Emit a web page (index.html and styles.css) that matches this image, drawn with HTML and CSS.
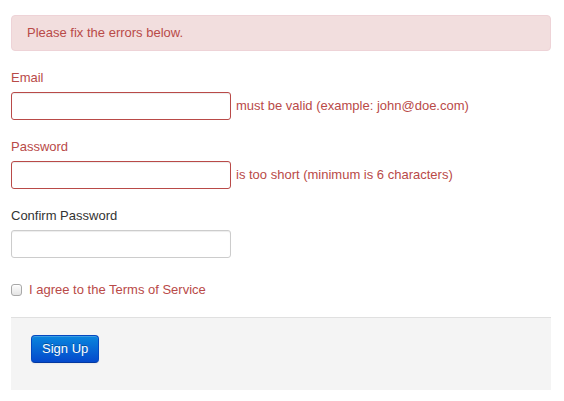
FILE: index.html
```html
<!DOCTYPE html>
<html>
<head>
<meta charset="utf-8">
<link rel="stylesheet" href="styles.css">
</head>
<body>
<div class="page">
  <div class="alert">Please fix the errors below.</div>
  <form class="form">
    <div class="group error">
      <label class="lbl">Email</label>
      <div class="row">
        <input class="field" type="text">
        <span class="help">must be valid (example: john@doe.com)</span>
      </div>
    </div>
    <div class="group error">
      <label class="lbl">Password</label>
      <div class="row">
        <input class="field" type="password">
        <span class="help">is too short (minimum is 6 characters)</span>
      </div>
    </div>
    <div class="group">
      <label class="lbl">Confirm Password</label>
      <div class="row">
        <input class="field" type="password">
      </div>
    </div>
    <label class="check error">
      <input class="box" type="checkbox">
      <span>I agree to the Terms of Service</span>
    </label>
    <div class="actions">
      <button type="button" class="btn">Sign Up</button>
    </div>
  </form>
</div>
</body>
</html>
```

FILE: styles.css
```css
* { box-sizing: border-box; }
html, body { margin: 0; padding: 0; background: #fff; }
body {
  font-family: "Liberation Sans", Arial, Helvetica, sans-serif;
  font-size: 13px;
  line-height: 18px;
  color: #333;
}
.page {
  width: 540px;
  margin: 15px 0 0 11px;
}
.alert {
  background: #f2dede;
  border: 1px solid #eed3d7;
  color: #b94a48;
  border-radius: 4px;
  padding: 8px 14px 8px 15px;
  height: 36px;
  margin-bottom: 18px;
}
.form { margin: 0; }
.group {
  display: flex;
  flex-direction: column;
  margin-bottom: 18px;
}
.lbl {
  display: block;
  height: 18px;
  margin-bottom: 5px;
  color: #333;
}
.row {
  display: flex;
  align-items: center;
  gap: 5px;
}
.field {
  width: 220px;
  height: 28px;
  margin: 0;
  padding: 4px 6px;
  font: inherit;
  border: 1px solid #ccc;
  border-radius: 3px;
  background: #fff;
  box-shadow: inset 0 1px 1px rgba(0, 0, 0, 0.075);
  outline: none;
}
.help { color: #b94a48; }
.error .lbl { color: #b94a48; }
.error .field { border-color: #b94a48; }
.check {
  display: flex;
  align-items: center;
  gap: 7px;
  height: 18px;
  margin-top: 23px;
  margin-bottom: 18px;
  color: #b94a48;
}
.box {
  -webkit-appearance: none;
  appearance: none;
  width: 11px;
  height: 12px;
  margin: 0;
  border: 1px solid #a8a8a8;
  border-radius: 3px;
  background: linear-gradient(#fdfdfd, #e4e4e4);
  box-shadow: inset 0 1px 0 #fff;
}
.actions {
  background: #f4f4f4;
  border-top: 1px solid #e0e0e0;
  padding: 17px 20px 27px;
  height: 73px;
}
.btn {
  display: block;
  white-space: nowrap;
  height: 28px;
  padding: 4px 10px;
  font: inherit;
  font-size: 13px;
  line-height: 18px;
  color: #fff;
  text-shadow: 0 -1px 0 rgba(0, 0, 0, 0.3);
  background: linear-gradient(#0a86dd, #0449cc);
  border: 1px solid #0448c0;
  border-bottom-color: #0338a0;
  border-radius: 4px;
  box-shadow: inset 0 1px 0 rgba(255, 255, 255, 0.2), 0 1px 2px rgba(0, 0, 0, 0.05);
}
```
